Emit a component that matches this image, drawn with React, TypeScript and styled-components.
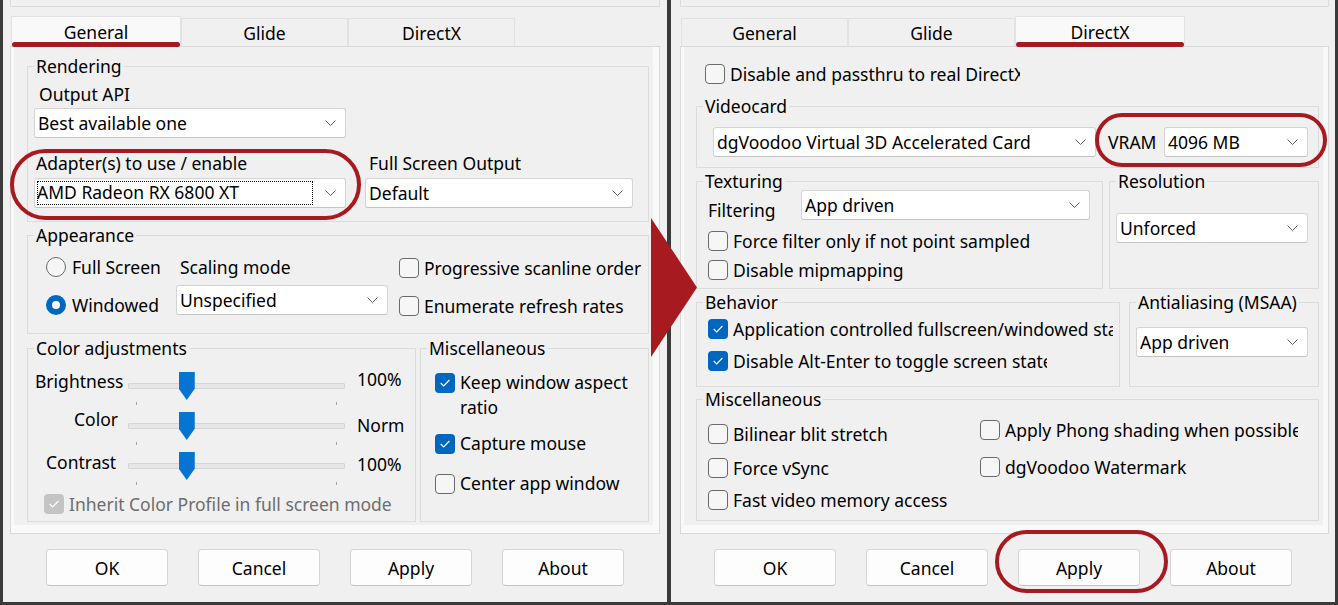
import React from 'react';
import styled, { createGlobalStyle, css } from 'styled-components';

const FONT = `"Noto Sans", "Open Sans", "Liberation Sans", Arial, sans-serif`;
const FS = '17.5px';
const RED = '#a71a1f';
const BLUE = '#0067c0';
const LINE = '#dcdcdc';

const GlobalStyle = createGlobalStyle`
  html, body { margin: 0; padding: 0; background: #f0f0f0; overflow: hidden; }
  body { font-family: ${FONT}; }
  *, *::before, *::after { box-sizing: border-box; }
`;

const Root = styled.div`
  position: relative;
  display: flex;
  width: 1338px;
  height: 605px;
  overflow: hidden;
  font-family: ${FONT};
  font-size: ${FS};
  line-height: 24px;
  color: #000;
  background: #f0f0f0;
`;

const Window = styled.div<{ $side: 'left' | 'right' }>`
  flex: none;
  display: flex;
  flex-direction: column;
  height: 605px;
  background: #f0f0f0;
  border-style: solid;
  border-color: #3a3a3a;
  border-width: 0 0 3px 0;
  ${p =>
    p.$side === 'left'
      ? css`width: 667px; border-left-width: 3px;`
      : css`width: 671px; border-left-width: 4px; border-right-width: 3px;`}
`;

const TopStub = styled.div<{ $inset: number; $w: number }>`
  margin-left: ${p => p.$inset}px;
  width: ${p => p.$w}px;
  height: 7px;
  border: 1px solid ${LINE};
  border-top: none;
`;

const TabStrip = styled.div<{ $inset: number }>`
  display: flex;
  align-items: flex-end;
  height: 30px;
  margin-top: 9px;
  margin-left: ${p => p.$inset + 1}px;
`;

const Tab = styled.div<{ $active?: boolean }>`
  position: relative;
  flex: none;
  width: ${p => (p.$active ? 170 : 167)}px;
  height: ${p => (p.$active ? 30 : 28)}px;
  display: flex;
  align-items: center;
  justify-content: center;
  background: ${p => (p.$active ? '#f9f9f9' : '#f0f0f0')};
  border: 1px solid #e2e2e2;
  border-bottom: none;
  ${p =>
    p.$active &&
    css`
      &::after {
        content: '';
        position: absolute;
        left: 0;
        right: 0;
        bottom: -1px;
        height: 5px;
        border-radius: 3px;
        background: ${RED};
      }
    `}
`;

const Page = styled.div<{ $inset: number; $w: number }>`
  margin-left: ${p => p.$inset}px;
  width: ${p => p.$w}px;
  height: 488px;
  flex: none;
  display: flex;
  padding: 0 6px 8px 3px;
  background: #f9f9f9;
  border: 1px solid #d9d9d9;
`;

const PageInner = styled.div<{ $padL: number }>`
  flex: 1;
  display: flex;
  flex-direction: column;
  background: #f0f0f0;
  padding: 7px 4px 3px ${p => p.$padL}px;
`;

const Group = styled.fieldset<{ $w?: number; $mt?: number; $grow?: boolean }>`
  margin: ${p => p.$mt ?? 0}px 0 0 0;
  padding: 0;
  min-width: 0;
  border: 1px solid ${LINE};
  ${p => p.$w && css`width: ${p.$w}px; flex: none;`}
  ${p => p.$grow && css`flex: 1;`}
`;

const Legend = styled.legend`
  margin-left: 6px;
  padding: 0 2px;
  font-size: ${FS};
  line-height: 24px;
`;

const Body = styled.div<{ $pad: string }>`
  padding: ${p => p.$pad};
`;

const Row = styled.div<{ $mt?: number; $gap?: number; $align?: string; $grow?: boolean }>`
  display: flex;
  align-items: ${p => p.$align ?? 'flex-start'};
  gap: ${p => p.$gap ?? 0}px;
  margin-top: ${p => p.$mt ?? 0}px;
  ${p => p.$grow && css`flex: 1;`}
`;

const Col = styled.div<{ $mt?: number; $ml?: number; $w?: number }>`
  display: flex;
  flex-direction: column;
  align-items: flex-start;
  margin-top: ${p => p.$mt ?? 0}px;
  margin-left: ${p => p.$ml ?? 0}px;
  ${p => p.$w && css`width: ${p.$w}px; flex: none;`}
`;

const FieldLabel = styled.div<{ $indent?: number; $mt?: number; $ml?: number; $w?: number }>`
  padding-left: ${p => p.$indent ?? 0}px;
  margin-top: ${p => p.$mt ?? 0}px;
  margin-left: ${p => p.$ml ?? 0}px;
  white-space: nowrap;
  ${p => p.$w && css`width: ${p.$w}px; flex: none;`}
`;

const SelectBox = styled.div<{ $w: number; $mt?: number; $ml?: string }>`
  flex: none;
  width: ${p => p.$w}px;
  height: 30px;
  margin-top: ${p => p.$mt ?? 0}px;
  margin-left: ${p => p.$ml ?? '0'};
  display: flex;
  align-items: center;
  padding: 0 9px 0 2px;
  background: #ffffff;
  border: 1px solid #d4d4d4;
  border-bottom-color: #c4c4c4;
  border-radius: 3px;
`;

const SelectValue = styled.span`
  white-space: nowrap;
  overflow: hidden;
  padding-left: 1px;
`;

const FocusValue = styled.span`
  flex: none;
  width: 276px;
  height: 24px;
  line-height: 23px;
  white-space: nowrap;
  outline: 1px dotted #000;
  outline-offset: -1px;
`;

const ChevronSvg = styled.svg`
  flex: none;
  margin-left: auto;
`;

const CheckRow = styled.label<{ $mt?: number; $ml?: number; $lh: number }>`
  display: flex;
  align-items: flex-start;
  gap: 5px;
  margin-top: ${p => p.$mt ?? 0}px;
  margin-left: ${p => p.$ml ?? 0}px;
  line-height: ${p => p.$lh}px;
`;

const Box = styled.span<{ $on?: boolean; $dis?: boolean; $lh: number }>`
  flex: none;
  width: 20px;
  height: 20px;
  margin-top: ${p => (p.$lh - 20) / 2}px;
  border-radius: 4px;
  display: flex;
  align-items: center;
  justify-content: center;
  ${p =>
    p.$dis
      ? css`background: #c4c4c4;`
      : p.$on
      ? css`background: ${BLUE};`
      : css`background: #f6f6f6; border: 1px solid #6a6a6a;`}
`;

const CheckText = styled.span<{ $clip?: number; $wrap?: number; $dim?: boolean }>`
  white-space: nowrap;
  color: ${p => (p.$dim ? '#6d6d6d' : '#000')};
  ${p => p.$clip && css`max-width: ${p.$clip}px; overflow: hidden;`}
  ${p => p.$wrap && css`white-space: normal; max-width: ${p.$wrap}px;`}
`;

const RadioRow = styled.label<{ $mt?: number }>`
  display: flex;
  align-items: center;
  gap: 6px;
  height: 24px;
  margin-top: ${p => p.$mt ?? 0}px;
`;

const RadioDot = styled.span<{ $on?: boolean }>`
  flex: none;
  width: 20px;
  height: 20px;
  border-radius: 50%;
  display: flex;
  align-items: center;
  justify-content: center;
  ${p =>
    p.$on
      ? css`
          background: ${BLUE};
          &::after {
            content: '';
            width: 8px;
            height: 8px;
            border-radius: 50%;
            background: #fff;
          }
        `
      : css`background: #f6f6f6; border: 1px solid #6a6a6a;`}
`;

const SliderRow = styled.div<{ $mt?: number }>`
  display: flex;
  align-items: flex-start;
  height: 34px;
  margin-top: ${p => p.$mt ?? 0}px;
`;

const SliderLabel = styled.div<{ $indent: number; $off: number }>`
  flex: none;
  width: 93px;
  padding-left: ${p => p.$indent}px;
  margin-top: ${p => p.$off}px;
  white-space: nowrap;
`;

const SliderArea = styled.div`
  position: relative;
  flex: none;
  width: 217px;
  height: 34px;
`;

const Track = styled.div`
  margin-top: 11px;
  height: 6px;
  background: #e6e6e6;
  border: 1px solid #d6d6d6;
  border-radius: 1px;
`;

const Ticks = styled.div`
  display: flex;
  justify-content: space-between;
  padding: 0 8px;
  margin-top: 13px;
`;

const Tick = styled.span`
  width: 1px;
  height: 3px;
  background: #a0a0a0;
`;

const Thumb = styled.span`
  position: absolute;
  top: 0;
  width: 16px;
  height: 28px;
  background: #0574d3;
  clip-path: polygon(0 0, 100% 0, 100% 60%, 50% 100%, 0 60%);
`;

const SliderValue = styled.div<{ $off: number }>`
  margin-left: 12px;
  margin-top: ${p => p.$off}px;
  white-space: nowrap;
`;

const ButtonBar = styled.div`
  display: flex;
  justify-content: center;
  gap: 30px;
  margin-top: 15px;
`;

const Button = styled.button`
  flex: none;
  width: 122px;
  height: 37px;
  padding: 0;
  font-family: ${FONT};
  font-size: ${FS};
  color: #000;
  background: #fdfdfd;
  border: 1px solid #d5d5d5;
  border-bottom-color: #c3c3c3;
  border-radius: 4px;
`;

const Ring = styled.div<{ $x: number; $y: number; $w: number; $h: number }>`
  position: absolute;
  left: ${p => p.$x}px;
  top: ${p => p.$y}px;
  width: ${p => p.$w}px;
  height: ${p => p.$h}px;
  border: 4px solid ${RED};
  border-radius: 999px;
  pointer-events: none;
`;

const Arrow = styled.div`
  position: absolute;
  left: 651px;
  top: 218px;
  width: 46px;
  height: 139px;
  background: ${RED};
  clip-path: polygon(0 0, 100% 50%, 0 100%);
  pointer-events: none;
`;

/* ---------- small pieces ---------- */

const Chevron = () => (
  <ChevronSvg width="11" height="6" viewBox="0 0 11 6">
    <path d="M0.5 0.5 L5.5 5.5 L10.5 0.5" fill="none" stroke="#606060" strokeWidth="1" />
  </ChevronSvg>
);

const Select = ({
  w,
  mt,
  ml,
  value,
  focused,
}: {
  w: number;
  mt?: number;
  ml?: string;
  value: string;
  focused?: boolean;
}) => (
  <SelectBox $w={w} $mt={mt} $ml={ml}>
    {focused ? <FocusValue>{value}</FocusValue> : <SelectValue>{value}</SelectValue>}
    <Chevron />
  </SelectBox>
);

const CheckMark = () => (
  <svg width="20" height="20" viewBox="0 0 20 20">
    <path d="M5.7 10 L8.7 13 L14.4 7" fill="none" stroke="#fff" strokeWidth="1.1" />
  </svg>
);

const Check = ({
  label,
  checked,
  disabled,
  mt,
  ml,
  lh = 24,
  clip,
  wrap,
}: {
  label: string;
  checked?: boolean;
  disabled?: boolean;
  mt?: number;
  ml?: number;
  lh?: number;
  clip?: number;
  wrap?: number;
}) => (
  <CheckRow $mt={mt} $ml={ml} $lh={lh}>
    <Box $on={checked} $dis={disabled} $lh={lh}>
      {(checked || disabled) && <CheckMark />}
    </Box>
    <CheckText $clip={clip} $wrap={wrap} $dim={disabled}>
      {label}
    </CheckText>
  </CheckRow>
);

const Radio = ({ label, checked, mt }: { label: string; checked?: boolean; mt?: number }) => (
  <RadioRow $mt={mt}>
    <RadioDot $on={checked} />
    <span>{label}</span>
  </RadioRow>
);

const sliders = [
  { label: 'Brightness', indent: 0, value: '100%', frac: 0.25, lOff: -3, vOff: -5 },
  { label: 'Color', indent: 39, value: 'Norm', frac: 0.25, lOff: -5, vOff: 1 },
  { label: 'Contrast', indent: 11, value: '100%', frac: 0.25, lOff: -2, vOff: 0 },
];

const Tabs = ({ inset, active }: { inset: number; active: string }) => (
  <TabStrip $inset={inset}>
    {['General', 'Glide', 'DirectX'].map(t => (
      <Tab key={t} $active={t === active}>
        {t}
      </Tab>
    ))}
  </TabStrip>
);

const Buttons = () => (
  <ButtonBar>
    <Button>OK</Button>
    <Button>Cancel</Button>
    <Button>Apply</Button>
    <Button>About</Button>
  </ButtonBar>
);

/* ---------- panels ---------- */

const GeneralWindow = () => (
  <Window $side="left">
    <TopStub $inset={7} $w={650} />
    <Tabs inset={7} active="General" />
    <Page $inset={7} $w={650}>
      <PageInner $padL={13}>
        <Group>
          <Legend>Rendering</Legend>
          <Body $pad="4px 14px 13px 6px">
            <FieldLabel $indent={5}>Output API</FieldLabel>
            <Select w={312} mt={2} value="Best available one" />
            <Row $mt={13}>
              <Col>
                <FieldLabel $indent={2}>Adapter(s) to use / enable</FieldLabel>
                <Select w={312} mt={3} value="AMD Radeon RX 6800 XT" focused />
              </Col>
              <Col $ml={19}>
                <FieldLabel $indent={4}>Full Screen Output</FieldLabel>
                <Select w={268} mt={3} value="Default" />
              </Col>
            </Row>
          </Body>
        </Group>

        <Group $mt={1}>
          <Legend>Appearance</Legend>
          <Body $pad="8px 0 15px 18px">
            <Row>
              <Col $w={130}>
                <Radio label="Full Screen" />
                <Radio label="Windowed" checked mt={14} />
              </Col>
              <Col>
                <FieldLabel $indent={4}>Scaling mode</FieldLabel>
                <Select w={212} mt={6} value="Unspecified" />
              </Col>
              <Col $mt={1} $ml={11}>
                <Check label="Progressive scanline order" />
                <Check label="Enumerate refresh rates" mt={14} />
              </Col>
            </Row>
          </Body>
        </Group>

        <Row $mt={2} $gap={4} $align="stretch" $grow>
          <Group $w={389}>
            <Legend>Color adjustments</Legend>
            <Body $pad="12px 0 0 7px">
              {sliders.map((s, i) => (
                <SliderRow key={s.label} $mt={i === 0 ? 0 : 6}>
                  <SliderLabel $indent={s.indent} $off={s.lOff}>
                    {s.label}
                  </SliderLabel>
                  <SliderArea>
                    <Track />
                    <Ticks>
                      <Tick />
                      <Tick />
                    </Ticks>
                    <Thumb style={{ left: s.frac * 201 + 0.5 }} />
                  </SliderArea>
                  <SliderValue $off={s.vOff}>{s.value}</SliderValue>
                </SliderRow>
              ))}
              <Check
                label="Inherit Color Profile in full screen mode"
                disabled
                checked
                mt={6}
                ml={9}
              />
            </Body>
          </Group>
          <Group $grow>
            <Legend>Miscellaneous</Legend>
            <Body $pad="10px 8px 0 14px">
              <Check label="Keep window aspect ratio" checked lh={25} wrap={180} />
              <Check label="Capture mouse" checked lh={25} mt={11} />
              <Check label="Center app window" lh={25} mt={15} />
            </Body>
          </Group>
        </Row>
      </PageInner>
    </Page>
    <Buttons />
  </Window>
);

const DirectXWindow = () => (
  <Window $side="right">
    <TopStub $inset={9} $w={649} />
    <Tabs inset={9} active="DirectX" />
    <Page $inset={9} $w={649}>
      <PageInner $padL={12}>
        <Check label="Disable and passthru to real DirectX" mt={8} ml={9} clip={290} />

        <Group $mt={8}>
          <Legend>Videocard</Legend>
          <Body $pad="9px 10px 10px 16px">
            <Row $align="center">
              <Select w={383} value="dgVoodoo Virtual 3D Accelerated Card" />
              <FieldLabel $ml={12}>VRAM</FieldLabel>
              <Select w={144} ml="auto" value="4096 MB" />
            </Row>
          </Body>
        </Group>

        <Row $mt={1} $gap={6} $align="stretch">
          <Group $w={407}>
            <Legend>Texturing</Legend>
            <Body $pad="0 0 6px 11px">
              <Row $mt={-3}>
                <FieldLabel $w={93} $mt={8}>
                  Filtering
                </FieldLabel>
                <Select w={289} value="App driven" />
              </Row>
              <Check label="Force filter only if not point sampled" mt={7} />
              <Check label="Disable mipmapping" mt={5} />
            </Body>
          </Group>
          <Group $grow>
            <Legend>Resolution</Legend>
            <Body $pad="20px 10px 0 6px">
              <Select w={192} value="Unforced" />
            </Body>
          </Group>
        </Row>

        <Row $mt={1} $gap={9} $align="stretch">
          <Group $w={424}>
            <Legend>Behavior</Legend>
            <Body $pad="3px 0 13px 11px">
              <Check label="Application controlled fullscreen/windowed state" checked clip={380} />
              <Check label="Disable Alt-Enter to toggle screen state" checked mt={8} clip={314} />
            </Body>
          </Group>
          <Group $grow>
            <Legend>Antialiasing (MSAA)</Legend>
            <Body $pad="13px 10px 0 6px">
              <Select w={172} value="App driven" />
            </Body>
          </Group>
        </Row>

        <Group>
          <Legend>Miscellaneous</Legend>
          <Body $pad="0 0 8px 11px">
            <Row>
              <Col $w={272} $mt={11}>
                <Check label="Bilinear blit stretch" />
                <Check label="Force vSync" mt={10} />
                <Check label="Fast video memory access" mt={8} />
              </Col>
              <Col $mt={7}>
                <Check label="Apply Phong shading when possible" clip={293} />
                <Check label="dgVoodoo Watermark" mt={13} />
              </Col>
            </Row>
          </Body>
        </Group>
      </PageInner>
    </Page>
    <Buttons />
  </Window>
);

export default function App() {
  return (
    <>
      <GlobalStyle />
      <Root>
        <GeneralWindow />
        <DirectXWindow />
        <Ring $x={10} $y={149} $w={351} $h={71} />
        <Ring $x={1095} $y={113} $w={232} $h={54} />
        <Ring $x={995} $y={530} $w={173} $h={63} />
        <Arrow />
      </Root>
    </>
  );
}
